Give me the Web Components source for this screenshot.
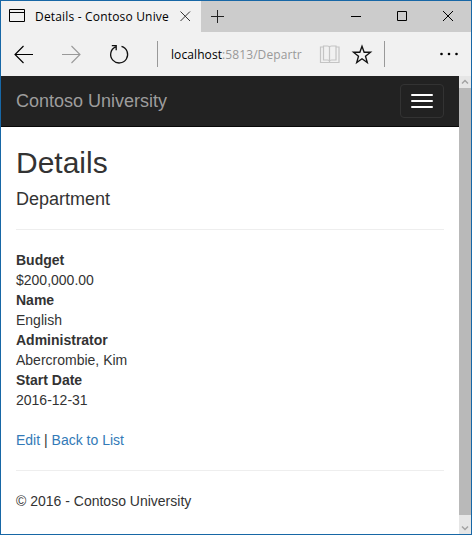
<!DOCTYPE html>
<html lang="en">
<head>
<meta charset="utf-8">
<title>Details - Contoso University</title>
<style>
html,body{margin:0;height:100%;overflow:hidden}
</style>
</head>
<body>
<browser-window>
  <tab-strip slot="tabs">Details - Contoso Unive</tab-strip>
  <address-bar slot="toolbar"><span slot="host">localhost</span><span slot="path">:5813/Departr</span></address-bar>
  <site-navbar>Contoso University</site-navbar>
  <department-details>
    <detail-item label="Budget">$200,000.00</detail-item>
    <detail-item label="Name">English</detail-item>
    <detail-item label="Administrator">Abercrombie, Kim</detail-item>
    <detail-item label="Start Date">2016-12-31</detail-item>
  </department-details>
  <scroll-bar slot="scroll"></scroll-bar>
</browser-window>
<script>
const define = (name, html) => customElements.define(name, class extends HTMLElement {
  constructor() {
    super();
    this.attachShadow({mode: 'open'}).innerHTML = html;
  }
  connectedCallback() {
    const label = this.shadowRoot.querySelector('[data-label]');
    if (label) label.textContent = this.getAttribute('label');
  }
});

define('browser-window', `
<style>
:host{display:flex;flex-direction:column;box-sizing:border-box;width:472px;height:535px;border:1px solid #1767a6;background:#fff}
.view{display:flex;flex:1;min-height:0}
.page{flex:1;min-width:0;overflow:hidden}
</style>
<slot name="tabs"></slot>
<slot name="toolbar"></slot>
<div class="view"><div class="page"><slot></slot></div><slot name="scroll"></slot></div>`);

define('tab-strip', `
<style>
:host{display:flex;height:31px;background:#ccc;font:12px/31px "Open Sans","Noto Sans",sans-serif;color:#000}
.tab{display:flex;width:200px;background:#f1f1f1}
.title{width:138px;margin-left:8px;white-space:nowrap;letter-spacing:.18px}
svg{display:block;fill:none;stroke:#000;flex:none}
.rest{flex:1}
</style>
<div class="tab">
  <svg width="26" height="31"><path d="M8.5 8.5h15v12h-15zM8 11.5h16"/></svg>
  <span class="title"><slot></slot></span>
  <svg width="28" height="31"><path stroke="#333" d="M7.500 10.500l9.500 9.500M17 10.500l-9.500 9.500"/></svg>
</div>
<svg width="34" height="31"><path stroke="#222" d="M10 15.5h13M16.5 9v13"/></svg>
<span class="rest"></span>
<svg width="127" height="31"><path d="M7 15.500h10M53.500 10.500h9v9h-9z"/><path d="M99 10l10 10M109 10l-10 10"/></svg>`);

define('address-bar', `
<style>
:host{display:flex;height:44px;background:#f1f1f1;font:12px/45px "Open Sans","Noto Sans",sans-serif;color:#000}
svg{display:block;fill:none;stroke:#000;flex:none}
.url{width:148px;white-space:nowrap;flex:none;letter-spacing:.09px}
.path{color:#999}
</style>
<svg width="170" height="44">
  <path stroke-width="1.150" d="M14 22.500h18M22.500 14l-8.500 8.500 8.500 8.500"/>
  <path stroke="#999" stroke-width="1.100" d="M61 22.500h18M70.500 14l8.500 8.500-8.500 8.500"/>
  <path stroke="#111" stroke-width="1.300" d="M120.500 14.300A8.500 8.500 0 1 1 114.500 14.800M110.800 13.700h4.400v4.500"/>
  <path stroke="#999" d="M156.500 9v26"/>
</svg>
<div class="url"><slot name="host"></slot><span class="path"><slot name="path"></slot></span></div>
<svg width="152" height="44">
  <path stroke="#c4c4c4" stroke-width="1.200" d="M4.500 15h-3v15.500h18.500v-15.500h-3M10.500 15v15.500M4.500 14h4q2 0 2 1.500q0-1.500 2-1.500h4.500v14h-4.500q-2 0-2 1.500q0-1.500-2-1.500h-4z"/>
  <path stroke="#111" stroke-width="1.350" stroke-linejoin="miter" d="M43 14.200l2.150 6h6.350l-5 4 1.800 6.300-5.300-3.700-5.300 3.700 1.800-6.300-5-4h6.350z"/>
  <path stroke="#999" d="M65.500 9v26"/>
  <g fill="#000" stroke="none"><circle cx="122.500" cy="22" r="1.300"/><circle cx="130" cy="22" r="1.300"/><circle cx="137.500" cy="22" r="1.300"/></g>
</svg>`);

define('site-navbar', `
<style>
:host{display:flex;align-items:center;justify-content:space-between;box-sizing:border-box;height:51px;padding:0 15px;background:#222;border-bottom:1px solid #080808;color:#9d9d9d;font:18px/20px "Liberation Sans",Arial,sans-serif}
button{display:flex;flex-direction:column;gap:4px;box-sizing:border-box;width:44px;height:34px;padding:9px 10px;border:1px solid #333;border-radius:4px;background:transparent}
i{display:block;width:22px;height:2px;border-radius:1px;background:#fff}
</style>
<span><slot></slot></span>
<button aria-label="Toggle navigation"><i></i><i></i><i></i></button>`);

define('department-details', `
<style>
:host{display:block;padding:19px 15px 0;color:#333;font:14px/20px "Liberation Sans",Arial,sans-serif}
h2{margin:0 0 10px;font-size:30px;font-weight:500;line-height:33px}
h4{margin:0;font-size:18px;font-weight:500;line-height:20px}
hr{margin:20px 0 19px;border:0;border-top:1px solid #eee}
hr{margin-bottom:20px}
dl{margin:0 0 20px}
a{color:#337ab7;text-decoration:none}
footer{color:#333}
</style>
<h2>Details</h2>
<h4>Department</h4>
<hr>
<dl><slot></slot></dl>
<div><a href="#">Edit</a> | <a href="#">Back to List</a></div>
<hr>
<footer>© 2016 - Contoso University</footer>`);

define('detail-item', `
<style>
:host{display:block}
dt{font-weight:700}
dd{margin:0}
</style>
<dt data-label></dt><dd><slot></slot></dd>`);

define('scroll-bar', `
<style>
:host{display:flex;flex-direction:column;width:12px;background:#e6e6e6}
svg{display:block;fill:none;stroke:#a3a3a3;stroke-width:1.500}
.thumb{flex:1;background:#b9b9b9}
</style>
<svg width="12" height="12"><path d="M3 7.500l3-3 3 3"/></svg>
<div class="thumb"></div>
<svg width="12" height="19"><path d="M3 11.500l3 3 3-3"/></svg>`);
</script>
</body>
</html>
